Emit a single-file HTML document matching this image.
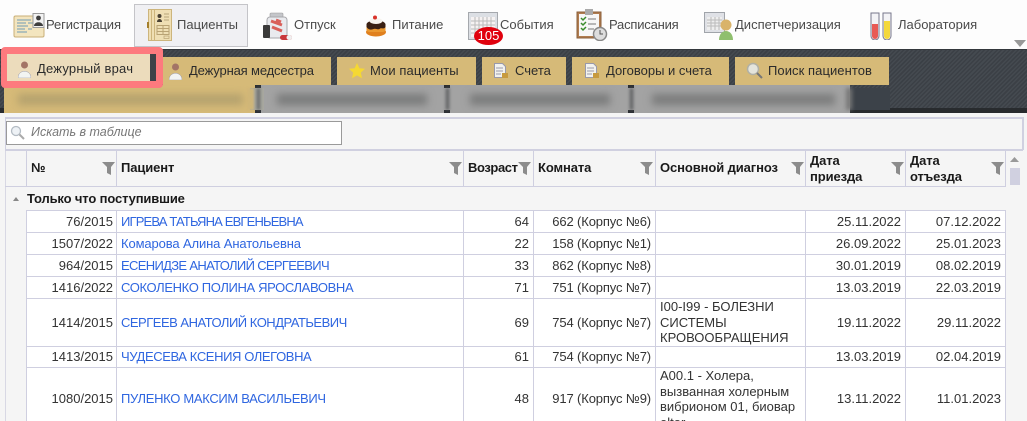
<!DOCTYPE html>
<html><head><meta charset="utf-8"><style>
html,body{margin:0;padding:0;width:1027px;height:421px;overflow:hidden;background:#f5f5f5}
#w{left:0;top:0;width:1027px;height:421px;overflow:hidden;background:#f5f5f5;font:13px "Liberation Sans",sans-serif;color:#222}
div,span,svg,a{position:absolute;white-space:nowrap}
.t{top:16px;font-size:13px;color:#4a4a4a;line-height:18px}
.tab{top:57px;height:28px;background:#d6ba78}
.tl{top:63px;font-size:13px;line-height:16px;color:#2b2b2b}
.h{font-weight:bold;font-size:13px;color:#1a1a1a;line-height:16px;letter-spacing:-.1px}
.v{background:#cfcfe0;width:1px}
.r{background:#fff;left:26px;width:979px}
.l{left:26px;width:979px;height:1px;background:#cfcfe0}
.c{line-height:15px;font-size:13px;color:#333}
.n{right:914px}.a{left:121px;color:#2f66e0}.g{right:498px}.k{right:376px;letter-spacing:-.13px}.d1{right:126px}.d2{right:26px}
.dx{left:660px;line-height:15.5px;font-size:13px;color:#333}
.b{filter:blur(4px)}
</style></head><body><div id="w">
<div style="left:0;top:0;width:1027px;height:49px;background:#fdfdfd"></div>
<div style="left:134px;top:4px;width:112px;height:41px;background:#f0f0f3;border:1px solid #c4c4c8"></div>

<svg style="left:13px;top:12px" width="33" height="27" viewBox="0 0 33 27"><rect x="1" y="4" width="30" height="21" rx="1.5" fill="#f3e5bf" stroke="#c9b078"/><path d="M4 8h14M4 11h9M4 14h11M4 17h8M4 20h10M15 11h5M15 17h4" stroke="#6f9cb4"/><rect x="20" y="1.5" width="11" height="14" fill="#f2f2f2" stroke="#999"/><circle cx="25.500" cy="6" r="2.400" fill="#3e3e3e"/><path d="M21 14c0-5 9-5 9 0z" fill="#3e3e3e"/></svg>
<span class="t" style="left:46px;letter-spacing:-.1px">Регистрация</span>
<svg style="left:147px;top:9px" width="26" height="32" viewBox="0 0 26 32"><rect x="1.500" y=".5" width="23" height="31" fill="#efdfb4" stroke="#cdb57c"/><path d="M4.500 1v30M7.500 1v30" stroke="#cdb57c"/><rect x="0" y="13" width="2" height="6" fill="#a47f2c"/><circle cx="12.500" cy="7" r="2" fill="#4a4234"/><path d="M10 13c0-4 5-4 5 0z" fill="#4a4234"/><path d="M17 5h5M17 8h5M17 11h5" stroke="#b7a47a"/><path d="M10 16.500h12v9H10zM10 19.500h12M10 22.500h12M16 16.500v9" fill="none" stroke="#b9a374"/><rect x="17" y="27" width="5" height="2.500" fill="none" stroke="#b9a374" stroke-width=".7"/></svg>
<span class="t" style="left:177px">Пациенты</span>
<svg style="left:262px;top:12px" width="31" height="29" viewBox="0 0 31 29"><rect x="8" y="1" width="13" height="4" rx="1" fill="#c4c6ca" stroke="#9a9a9a" stroke-width=".6"/><rect x="5" y="5" width="20" height="21" rx="3" fill="#e9eaee" stroke="#a8a8ac"/><path d="M9 9l11 4M10 15l10 4M14 8l5 2" stroke="#d9605a" stroke-width="3"/><rect x="1" y="13" width="7" height="13" rx="1" fill="#3a3a3a"/><rect x="18" y="23" width="12" height="5" rx="2.500" fill="#c9363a"/><rect x="24.500" y="23" width="5.500" height="5" rx="2.500" fill="#f0f0f0"/></svg>
<span class="t" style="left:294px">Отпуск</span>
<svg style="left:365px;top:15px" width="22" height="22" viewBox="0 0 22 22"><ellipse cx="11" cy="17" rx="10" ry="4.500" fill="#e0801e"/><rect x="1.500" y="8" width="19" height="9" rx="2.500" fill="#ea9830"/><path d="M1.500 9c2-5 17-5 19 0v3c-2 3-4 0-6 2-2 1-4-1-6 0s-5 1-7-2z" fill="#3a2014"/><ellipse cx="11" cy="6" rx="6.500" ry="3" fill="#f7f3ed"/><circle cx="10" cy="2.500" r="2" fill="#d9332b"/></svg>
<span class="t" style="left:392px">Питание</span>
<svg style="left:468px;top:12px" width="32" height="28" viewBox="0 0 32 28"><rect x=".5" y=".5" width="29" height="27" fill="#dcdfe4" stroke="#a5a8ad"/><rect x="3" y="5" width="24" height="20" fill="#f6f2f2"/><path d="M3 9h24M3 13h24M3 17h24M3 21h24M7 5v20M11 5v20M15 5v20M19 5v20M23 5v20" stroke="#bbb"/></svg>
<div style="left:474px;top:27px;width:29px;height:18px;background:#e0010d;border-radius:50%;color:#fff;font-size:13px;line-height:18px;text-align:center">105</div>
<span class="t" style="left:500px">События</span>
<svg style="left:576px;top:8px" width="32" height="33" viewBox="0 0 32 33"><rect x="1" y="4" width="24" height="26" fill="#b07c50" stroke="#8a5f3a"/><rect x="3" y="6" width="20" height="22" fill="#f7f7f7"/><rect x="9" y="1" width="8" height="6" fill="#aaa"/><path d="M5 10l2 2 3-3M5 15l2 2 3-3M5 20l2 2 3-3" stroke="#3a8c2c" stroke-width="1.500" fill="none"/><path d="M12 11h8M12 16h8M12 21h6" stroke="#777"/><circle cx="24" cy="26" r="6.500" fill="#ddd" stroke="#888" stroke-width="1.500"/><path d="M24 22v4h3" stroke="#555" fill="none"/></svg>
<span class="t" style="left:609px;letter-spacing:-.2px">Расписания</span>
<svg style="left:704px;top:11px" width="32" height="30" viewBox="0 0 32 30"><rect x=".5" y="1.500" width="20" height="20" fill="#dfe1e6" stroke="#a0a4aa"/><rect x="3" y="6" width="15" height="13" fill="#eee"/><path d="M3 9h15M3 12h15M3 15h15M7 6v13M11 6v13M15 6v13" stroke="#bbb"/><circle cx="22" cy="14" r="5.500" fill="#d9b36a"/><path d="M15 29c0-12 14-12 14 0z" fill="#8fbf6e"/></svg>
<span class="t" style="left:735px">Диспетчеризация</span>
<svg style="left:870px;top:12px" width="22" height="28" viewBox="0 0 22 28"><path d="M1 1h8v23a4 4 0 0 1-8 0z" fill="#f3f3f6" stroke="#77778c"/><path d="M13 1h8v23a4 4 0 0 1-8 0z" fill="#f3f3f6" stroke="#77778c"/><path d="M2 12h6v12a3 3 0 0 1-6 0z" fill="#e85a55"/><path d="M14 9h6v15a3 3 0 0 1-6 0z" fill="#f4d83c"/></svg>
<span class="t" style="left:898px">Лаборатория</span>
<svg style="left:1014px;top:40px" width="12" height="7" viewBox="0 0 12 7"><path d="M0 0h12L6 7z" fill="#999"/></svg>

<div style="left:0;top:49px;width:1027px;height:64px;background:repeating-linear-gradient(135deg,#3b4046 0 1.500px,#454a50 1.500px 3px)"></div>
<div style="left:0;top:49px;width:1027px;height:1px;background:#33373c"></div>
<div style="left:0;top:108px;width:1027px;height:5px;background:#282b2e"></div>

<div style="left:4px;top:85px;width:251px;height:28px;background:#d6ba78"></div>
<div style="left:255px;top:85px;width:6px;height:28px;background:#2c2f33"></div>
<div style="left:261px;top:85px;width:183px;height:28px;background:#a3a3a3"></div>
<div style="left:444px;top:85px;width:6px;height:28px;background:#2c2f33"></div>
<div style="left:450px;top:85px;width:178px;height:28px;background:#a3a3a3"></div>
<div style="left:628px;top:85px;width:6px;height:28px;background:#2c2f33"></div>
<div style="left:634px;top:85px;width:216px;height:28px;background:#a3a3a3"></div>
<div style="left:850px;top:88px;width:40px;height:22px;background:#3c4249"></div>
<div style="left:846px;top:88px;width:6px;height:22px;background:#777;filter:blur(2px)"></div>
<div style="left:250px;top:88px;width:14px;height:22px;background:#a8a8a0"></div>
<div style="left:248px;top:88px;width:6px;height:22px;background:#d0b679;filter:blur(1px)"></div>
<div style="left:444px;top:88px;width:6px;height:22px;background:#a3a3a3"></div>
<div style="left:628px;top:88px;width:6px;height:22px;background:#a3a3a3"></div>
<div style="left:446px;top:88px;width:3px;height:22px;background:#56585a;filter:blur(1.500px)"></div>
<div style="left:630px;top:88px;width:3px;height:22px;background:#56585a;filter:blur(1.500px)"></div>
<div style="left:257px;top:88px;width:3px;height:22px;background:#606264;filter:blur(1.500px)"></div>
<div class="b" style="left:18px;top:94px;width:225px;height:11px;background:#b5a26e"></div>
<div class="b" style="left:277px;top:94px;width:150px;height:11px;background:#7a7b7b"></div>
<div class="b" style="left:470px;top:94px;width:140px;height:11px;background:#7a7b7b"></div>
<div class="b" style="left:652px;top:94px;width:183px;height:11px;background:#7b7c7c"></div>

<div style="left:1px;top:47px;width:162px;height:41px;background:#fd7a7e;border-radius:4px"></div>
<div style="left:7px;top:54px;width:143px;height:27px;background:#ecdcbc"></div>
<div style="left:150px;top:54px;width:6px;height:27px;background:#3e4248"></div>
<svg style="left:18px;top:61px" width="13" height="17" viewBox="0 0 13 17"><circle cx="6.500" cy="4" r="3.500" fill="#a37466"/><path d="M0 17c0-9 13-9 13 0z" fill="#f2f4f2" stroke="#99a" stroke-width=".5"/></svg>
<span class="tl" style="left:37px;top:61px;letter-spacing:.2px">Дежурный врач</span>

<div class="tab" style="left:163px;width:168px"></div>
<svg style="left:169px;top:63px" width="13" height="17" viewBox="0 0 13 17"><circle cx="6.500" cy="4" r="3.500" fill="#a37466"/><path d="M0 17c0-9 13-9 13 0z" fill="#f2f4f2" stroke="#99a" stroke-width=".5"/></svg>
<span class="tl" style="left:189px;letter-spacing:-.15px">Дежурная медсестра</span>
<div class="tab" style="left:337px;width:139px"></div>
<svg style="left:349px;top:63px" width="16" height="16" viewBox="0 0 16 16"><path d="M8 0l2.400 5.200 5.600.6-4.200 3.800 1.200 5.600L8 12.400l-5 2.800 1.200-5.600L0 5.800l5.600-.6z" fill="#f5d832"/></svg>
<span class="tl" style="left:370px;letter-spacing:.08px">Мои пациенты</span>
<div class="tab" style="left:482px;width:84px"></div>
<svg style="left:494px;top:63px" width="15" height="16" viewBox="0 0 15 16"><path d="M.5.5h8l3 3v11H.5z" fill="#f2f2ee" stroke="#99a"/><path d="M2 5h7M2 8h7M2 11h5" stroke="#99a"/><rect x="8" y="10" width="6" height="5" fill="#c79a3e"/></svg>
<span class="tl" style="left:515px">Счета</span>
<div class="tab" style="left:572px;width:157px"></div>
<svg style="left:585px;top:63px" width="15" height="16" viewBox="0 0 15 16"><path d="M.5.5h8l3 3v11H.5z" fill="#f2f2ee" stroke="#99a"/><path d="M2 5h7M2 8h7M2 11h5" stroke="#99a"/><rect x="8" y="10" width="6" height="5" fill="#c79a3e"/></svg>
<span class="tl" style="left:606px">Договоры и счета</span>
<div class="tab" style="left:735px;width:154px"></div>
<svg style="left:746px;top:62px" width="17" height="17" viewBox="0 0 17 17"><circle cx="7" cy="7" r="5.500" fill="#e4e4dc" stroke="#b0b0a6" stroke-width="1.500"/><path d="M11 11l5 5" stroke="#777" stroke-width="2"/></svg>
<span class="tl" style="left:768px;letter-spacing:.07px">Поиск пациентов</span>

<div style="left:0;top:113px;width:1027px;height:308px;background:#f5f5f5"></div>
<div style="left:5px;top:117px;width:1018px;height:2px;background:#d0d0e0"></div>
<div style="left:1022px;top:117px;width:2px;height:33px;background:#d0d0e0"></div>
<div style="left:5px;top:117px;width:1px;height:33px;background:#d0d0e0"></div>

<div style="left:6px;top:121px;width:334px;height:22px;background:#fff;border:1px solid #9a9a9a"></div>
<svg style="left:10px;top:125px" width="15" height="15" viewBox="0 0 15 15"><circle cx="6" cy="6" r="4.500" fill="#eef2f6" stroke="#b4bcc4" stroke-width="1.300"/><path d="M9.500 9.500l4.500 4.500" stroke="#aaa" stroke-width="2"/></svg>
<span style="left:31px;top:125px;font-size:12.500px;line-height:15px;font-style:italic;color:#777">Искать в таблице</span>

<div style="left:5px;top:149px;width:1018px;height:2px;background:#d0d0e0"></div>
<div style="left:5px;top:151px;width:1px;height:270px;background:#d8d8e4"></div>
<div style="left:5px;top:186px;width:1001px;height:1px;background:#cfcfe0"></div>

<div class="r" style="top:210px;height:211px"></div>
<div class="l" style="top:210px"></div><div class="l" style="top:232px"></div><div class="l" style="top:254px"></div><div class="l" style="top:276px"></div><div class="l" style="top:298px"></div><div class="l" style="top:346px"></div><div class="l" style="top:367px"></div>

<div class="v" style="left:26px;top:151px;height:35px"></div><div class="v" style="left:116px;top:151px;height:35px"></div><div class="v" style="left:463px;top:151px;height:35px"></div><div class="v" style="left:533px;top:151px;height:35px"></div><div class="v" style="left:655px;top:151px;height:35px"></div><div class="v" style="left:805px;top:151px;height:35px"></div><div class="v" style="left:905px;top:151px;height:35px"></div><div class="v" style="left:1005px;top:151px;height:35px"></div>
<div class="v" style="left:26px;top:210px;height:211px"></div><div class="v" style="left:116px;top:210px;height:211px"></div><div class="v" style="left:463px;top:210px;height:211px"></div><div class="v" style="left:533px;top:210px;height:211px"></div><div class="v" style="left:655px;top:210px;height:211px"></div><div class="v" style="left:805px;top:210px;height:211px"></div><div class="v" style="left:905px;top:210px;height:211px"></div><div class="v" style="left:1005px;top:210px;height:211px"></div>

<span class="h" style="left:31px;top:160px">№</span>
<span class="h" style="left:121px;top:160px">Пациент</span>
<span class="h" style="left:468px;top:160px;letter-spacing:-.4px">Возраст</span>
<span class="h" style="left:538px;top:160px">Комната</span>
<span class="h" style="left:660px;top:160px">Основной диагноз</span>
<span class="h" style="left:810px;top:153px">Дата<br>приезда</span>
<span class="h" style="left:910px;top:153px">Дата<br>отъезда</span>
<svg style="left:102px;top:162px" width="13" height="13" viewBox="0 0 13 13"><path d="M0 0h13L9 5v8L5 11V5z" fill="#8c8c8c"/></svg>
<svg style="left:449px;top:162px" width="13" height="13" viewBox="0 0 13 13"><path d="M0 0h13L9 5v8L5 11V5z" fill="#8c8c8c"/></svg>
<svg style="left:518px;top:162px" width="13" height="13" viewBox="0 0 13 13"><path d="M0 0h13L9 5v8L5 11V5z" fill="#8c8c8c"/></svg>
<svg style="left:640px;top:162px" width="13" height="13" viewBox="0 0 13 13"><path d="M0 0h13L9 5v8L5 11V5z" fill="#8c8c8c"/></svg>
<svg style="left:791px;top:162px" width="13" height="13" viewBox="0 0 13 13"><path d="M0 0h13L9 5v8L5 11V5z" fill="#8c8c8c"/></svg>
<svg style="left:891px;top:162px" width="13" height="13" viewBox="0 0 13 13"><path d="M0 0h13L9 5v8L5 11V5z" fill="#8c8c8c"/></svg>
<svg style="left:991px;top:162px" width="13" height="13" viewBox="0 0 13 13"><path d="M0 0h13L9 5v8L5 11V5z" fill="#8c8c8c"/></svg>

<svg style="left:1010px;top:157px" width="9" height="5" viewBox="0 0 9 5"><path d="M0 5L4.500 0 9 5z" fill="#999"/></svg>
<div style="left:1010px;top:168px;width:10px;height:17px;background:#d0d0e0"></div>

<svg style="left:13px;top:197px" width="6" height="4" viewBox="0 0 6 4"><path d="M0 4L3 0l3 4z" fill="#888"/></svg>
<span class="h" style="left:27px;top:191px;letter-spacing:-.14px">Только что поступившие</span>

<span class="c n" style="top:214px">76/2015</span><span class="c a" style="top:214px;letter-spacing:-.84px">ИГРЕВА ТАТЬЯНА ЕВГЕНЬЕВНА</span><span class="c g" style="top:214px">64</span><span class="c k" style="top:214px">662 (Корпус №6)</span><span class="c d1" style="top:214px">25.11.2022</span><span class="c d2" style="top:214px">07.12.2022</span>
<span class="c n" style="top:236px">1507/2022</span><span class="c a" style="top:236px;letter-spacing:-.12px">Комарова Алина Анатольевна</span><span class="c g" style="top:236px">22</span><span class="c k" style="top:236px">158 (Корпус №1)</span><span class="c d1" style="top:236px">26.09.2022</span><span class="c d2" style="top:236px">25.01.2023</span>
<span class="c n" style="top:258px">964/2015</span><span class="c a" style="top:258px;letter-spacing:-.67px">ЕСЕНИДЗЕ АНАТОЛИЙ СЕРГЕЕВИЧ</span><span class="c g" style="top:258px">33</span><span class="c k" style="top:258px">862 (Корпус №8)</span><span class="c d1" style="top:258px">30.01.2019</span><span class="c d2" style="top:258px">08.02.2019</span>
<span class="c n" style="top:280px">1416/2022</span><span class="c a" style="top:280px;letter-spacing:-.36px">СОКОЛЕНКО ПОЛИНА ЯРОСЛАВОВНА</span><span class="c g" style="top:280px">71</span><span class="c k" style="top:280px">751 (Корпус №7)</span><span class="c d1" style="top:280px">13.03.2019</span><span class="c d2" style="top:280px">22.03.2019</span>
<span class="c n" style="top:315px">1414/2015</span><span class="c a" style="top:315px;letter-spacing:-.5px">СЕРГЕЕВ АНАТОЛИЙ КОНДРАТЬЕВИЧ</span><span class="c g" style="top:315px">69</span><span class="c k" style="top:315px">754 (Корпус №7)</span><span class="dx" style="top:299px">I00-I99 - БОЛЕЗНИ<br>СИСТЕМЫ<br>КРОВООБРАЩЕНИЯ</span><span class="c d1" style="top:315px">19.11.2022</span><span class="c d2" style="top:315px">29.11.2022</span>
<span class="c n" style="top:349px">1413/2015</span><span class="c a" style="top:349px;letter-spacing:-.4px">ЧУДЕСЕВА КСЕНИЯ ОЛЕГОВНА</span><span class="c g" style="top:349px">61</span><span class="c k" style="top:349px">754 (Корпус №7)</span><span class="c d1" style="top:349px">13.03.2019</span><span class="c d2" style="top:349px">02.04.2019</span>
<span class="c n" style="top:391px">1080/2015</span><span class="c a" style="top:391px;letter-spacing:-.32px">ПУЛЕНКО МАКСИМ ВАСИЛЬЕВИЧ</span><span class="c g" style="top:391px">48</span><span class="c k" style="top:391px">917 (Корпус №9)</span><span class="dx" style="top:368px">A00.1 - Холера,<br>вызванная холерным<br>вибрионом 01, биовар<br>eltor</span><span class="c d1" style="top:391px">13.11.2022</span><span class="c d2" style="top:391px">11.01.2023</span>
</div></body></html>
